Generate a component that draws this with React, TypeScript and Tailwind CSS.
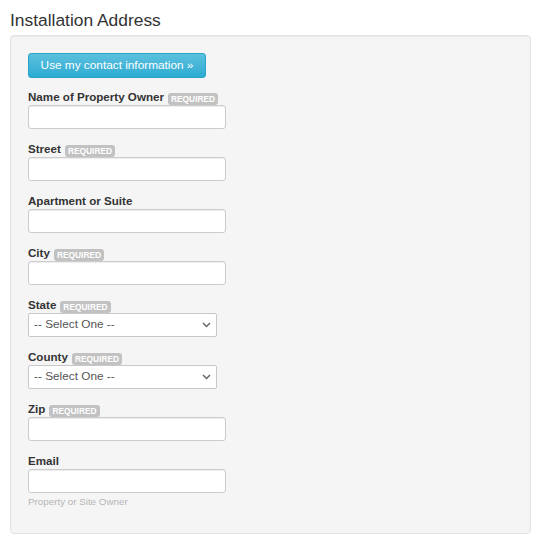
import React from "react";

const Badge = () => (
  <span className="ml-[4px] inline-flex h-[12px] items-center rounded-[3px] bg-[#c2c2c2] px-[3px] align-[-1px] text-[8.4px] font-bold leading-none text-white">
    REQUIRED
  </span>
);

const Label = ({ text, required }: { text: string; required?: boolean }) => (
  <div className="h-[17px] text-[11.6px] font-bold leading-[17px] text-[#333]">
    {text}
    {required && <Badge />}
  </div>
);

const TextField = ({ label, required, help }: { label: string; required?: boolean; help?: string }) => (
  <div className="mb-[11px]">
    <Label text={label} required={required} />
    <input
      type="text"
      className="block h-[24px] w-[198px] rounded-[3px] border border-[#cccccc] bg-white px-[6px] text-[12px] outline-none shadow-[inset_0_1px_1px_rgba(0,0,0,0.075)]"
    />
    {help && <div className="mt-[2px] text-[9.8px] leading-[14px] text-[#b5b5b5]">{help}</div>}
  </div>
);

const SelectField = ({ label, required }: { label: string; required?: boolean }) => (
  <div className="mb-[11px]">
    <Label text={label} required={required} />
    <div className="relative h-[24px] w-[189px]">
      <select className="block h-[24px] w-[189px] appearance-none rounded-[2px] border border-[#c8c8c8] bg-white pl-[5px] text-[11.8px] text-[#555] outline-none">
        <option>-- Select One --</option>
      </select>
      <svg
        className="pointer-events-none absolute right-[6px] top-[9px]"
        width="9"
        height="6"
        viewBox="0 0 9 6"
      >
        <path d="M1 1 L4.5 4.5 L8 1" fill="none" stroke="#666" strokeWidth="1.5" />
      </svg>
    </div>
  </div>
);

export default function App() {
  return (
    <div className="w-[543px] h-[545px] bg-white px-[10px] pt-[8px] font-['Liberation_Sans',Arial,sans-serif]">
      <div className="h-[24px] text-[17.4px] leading-[24px] text-[#333]">Installation Address</div>
      <div className="mt-[3px] w-[521px] rounded-[4px] border border-[#e3e3e3] bg-[#f5f5f5] px-[17px] pt-[17px] pb-[13px] shadow-[inset_0_1px_1px_rgba(0,0,0,0.05)]">
        <button className="mb-[10px] flex h-[25px] w-[178px] items-center justify-center rounded-[3px] border border-[#28a4c9] bg-gradient-to-b from-[#5bc0de] to-[#2aabd2] text-[11.8px] text-white">
          Use my contact information »
        </button>
        <TextField label="Name of Property Owner" required />
        <TextField label="Street" required />
        <TextField label="Apartment or Suite" />
        <TextField label="City" required />
        <SelectField label="State" required />
        <SelectField label="County" required />
        <TextField label="Zip" required />
        <TextField label="Email" help="Property or Site Owner" />
      </div>
    </div>
  );
}
